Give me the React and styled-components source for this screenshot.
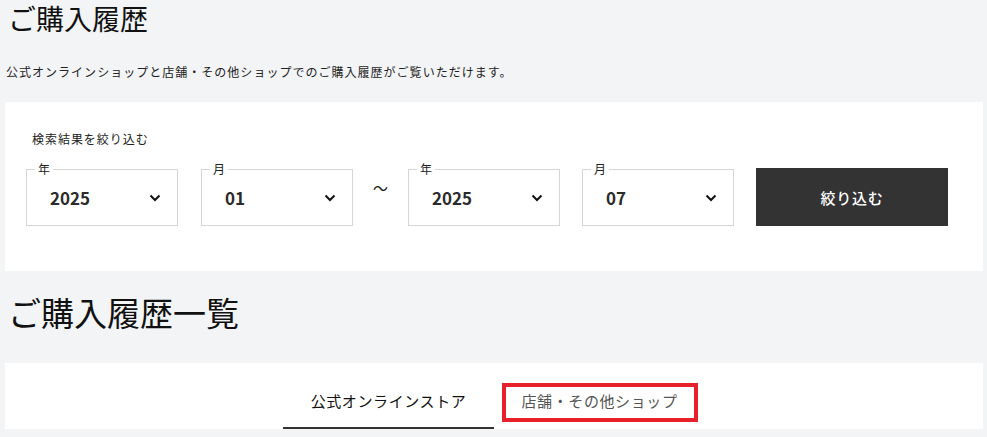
import React, { useState } from "react";
import styled, { createGlobalStyle } from "styled-components";

const GlobalStyle = createGlobalStyle`
  html, body {
    margin: 0;
    padding: 0;
    background: #f3f4f6;
  }
  body {
    font-family: "Noto Sans CJK JP", "Noto Sans", sans-serif;
    color: #222;
  }
`;

const Page = styled.div`
  padding: 0 4px 0 5px;
`;

const PageTitle = styled.h1`
  margin: 0;
  padding: 0 0 0 3px;
  font-size: 28px;
  font-weight: 400;
  line-height: 36px;
  color: #111;
`;

const Lead = styled.p`
  margin: 27px 0 0 1px;
  font-size: 12px;
  line-height: 18px;
  letter-spacing: 0.085em;
`;

const Panel = styled.section`
  background: #fff;
  margin-top: ${(p) => p.$top}px;
  padding: ${(p) => p.$pad};
`;

const FilterTitle = styled.div`
  margin-left: 6px;
  font-size: 12px;
  line-height: 18px;
  letter-spacing: 0.08em;
`;

const FilterRow = styled.div`
  display: flex;
  align-items: center;
  margin-top: 20px;
`;

const Field = styled.div`
  position: relative;
  width: 152px;
  height: 57px;
  margin-right: ${(p) => p.$gap}px;
`;

const FieldLabel = styled.span`
  position: absolute;
  top: -7px;
  left: 9px;
  padding: 0 3px;
  background: #fff;
  font-size: 12px;
  line-height: 14px;
  color: #222;
`;

const Select = styled.select`
  appearance: none;
  width: 100%;
  height: 100%;
  border: 1px solid #d6d6d6;
  border-radius: 0;
  background: transparent;
  padding: 0 0 0 23px;
  font-family: "Noto Sans CJK JP", "Noto Sans", sans-serif;
  font-size: 17px;
  font-weight: 700;
  color: #2b2b2b;
  outline: none;
`;

const Chevron = styled.svg`
  position: absolute;
  right: 17px;
  top: 25px;
  pointer-events: none;
`;

const Tilde = styled.span`
  width: 55px;
  text-align: center;
  font-size: 15px;
  margin-top: -20px;
`;

const SubmitButton = styled.button`
  width: 192px;
  height: 58px;
  border: none;
  background: #333;
  color: #fff;
  font-family: "Noto Sans CJK JP", "Noto Sans", sans-serif;
  font-size: 15px;
  font-weight: 500;
  letter-spacing: 0.05em;
  cursor: pointer;
`;

const SectionTitle = styled.h2`
  margin: 21px 0 0 3px;
  font-size: 33px;
  font-weight: 400;
  line-height: 40px;
  color: #111;
`;

const Tabs = styled.div`
  display: flex;
  justify-content: center;
`;

const Tab = styled.button`
  position: relative;
  width: 211px;
  height: 66px;
  border: none;
  border-bottom: 2px solid ${(p) => (p.$active ? "#333" : "transparent")};
  background: none;
  font-family: "Noto Sans CJK JP", "Noto Sans", sans-serif;
  font-size: 15px;
  letter-spacing: 0.04em;
  color: ${(p) => (p.$active ? "#111" : "#555")};
  padding: 10px 0 0;
  cursor: pointer;

  ${(p) =>
    p.$marked &&
    `
    &::after {
      content: "";
      position: absolute;
      left: 8px;
      right: 7px;
      top: 20px;
      height: 39px;
      box-sizing: border-box;
      border: 4px solid #e8202a;
    }
  `}
`;

function DateSelect({ label, value, options, gap, onChange }) {
  return (
    <Field $gap={gap}>
      <Select value={value} onChange={(e) => onChange(e.target.value)}>
        {options.map((o) => (
          <option key={o} value={o}>
            {o}
          </option>
        ))}
      </Select>
      <Chevron width="12" height="8" viewBox="0 0 12 8">
        <path
          d="M1.5 1.5 L6 6 L10.5 1.5"
          fill="none"
          stroke="#111"
          strokeWidth="2"
        />
      </Chevron>
      <FieldLabel>{label}</FieldLabel>
    </Field>
  );
}

const years = ["2023", "2024", "2025"];
const months = Array.from({ length: 12 }, (_, i) => String(i + 1).padStart(2, "0"));

export default function App() {
  const [fromYear, setFromYear] = useState("2025");
  const [fromMonth, setFromMonth] = useState("01");
  const [toYear, setToYear] = useState("2025");
  const [toMonth, setToMonth] = useState("07");
  const [tab, setTab] = useState("online");

  return (
    <>
      <GlobalStyle />
      <Page>
        <PageTitle>ご購入履歴</PageTitle>
        <Lead>
          公式オンラインショップと店舗・その他ショップでのご購入履歴がご覧いただけます。
        </Lead>

        <Panel $top={21} $pad="28px 21px 45px">
          <FilterTitle>検索結果を絞り込む</FilterTitle>
          <FilterRow>
            <DateSelect label="年" value={fromYear} options={years} gap={23} onChange={setFromYear} />
            <DateSelect label="月" value={fromMonth} options={months} gap={0} onChange={setFromMonth} />
            <Tilde>〜</Tilde>
            <DateSelect label="年" value={toYear} options={years} gap={22} onChange={setToYear} />
            <DateSelect label="月" value={toMonth} options={months} gap={22} onChange={setToMonth} />
            <SubmitButton>絞り込む</SubmitButton>
          </FilterRow>
        </Panel>

        <SectionTitle>ご購入履歴一覧</SectionTitle>

        <Panel $top={31} $pad="0">
          <Tabs>
            <Tab $active={tab === "online"} onClick={() => setTab("online")}>
              公式オンラインストア
            </Tab>
            <Tab $active={tab === "store"} $marked onClick={() => setTab("store")}>
              店舗・その他ショップ
            </Tab>
          </Tabs>
        </Panel>
      </Page>
    </>
  );
}
